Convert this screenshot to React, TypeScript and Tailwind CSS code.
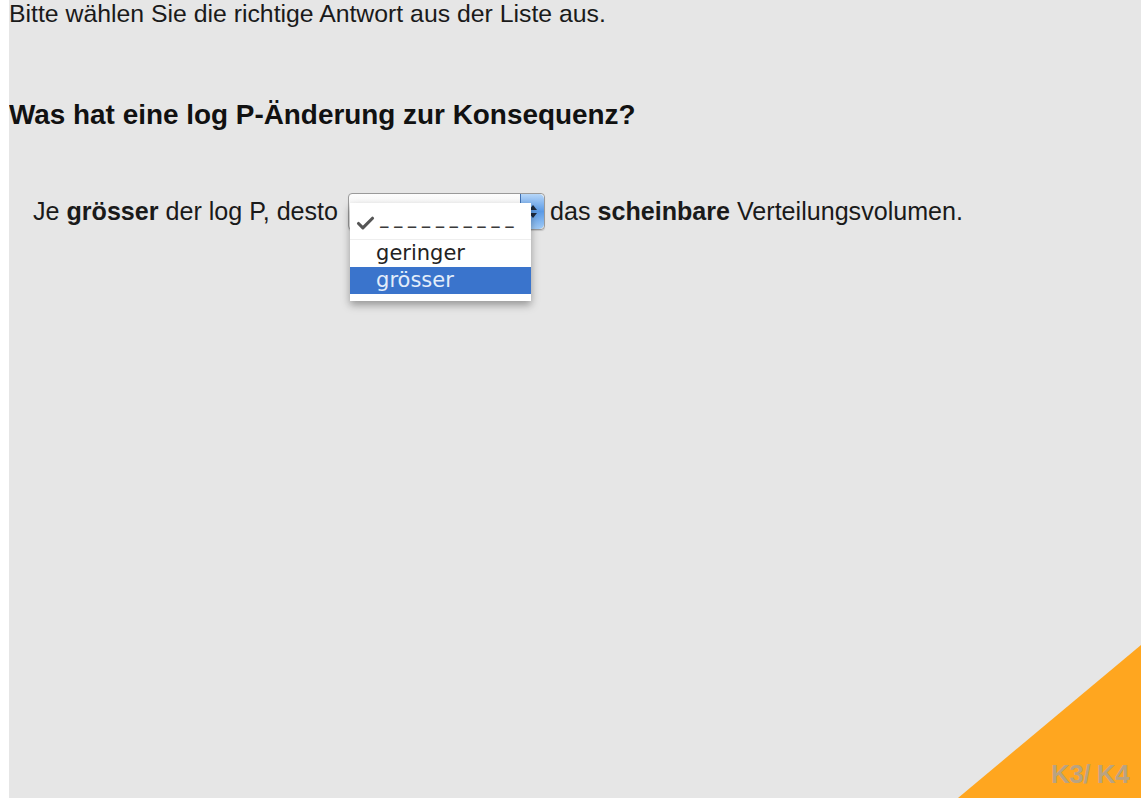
import { Check } from 'lucide-react';

// Quiz page: one fill-in-the-gap sentence with an open choice list.
const options = ['geringer', 'grösser'];

function OpenSelect() {
  return (
    <span className="relative ml-[10px] mr-[5px] inline-block h-[37px] w-[197px] shrink-0">
      {/* closed control behind the popup */}
      <span className="absolute inset-0 flex rounded-[4px] border border-[#9a9a9a] bg-gradient-to-b from-[#fdfdfd] to-[#e9e9e9] shadow-[0_1px_1px_rgba(0,0,0,0.15)]">
        <span className="flex-1" />
        <span className="flex w-[24px] flex-col items-center justify-center gap-[3px] rounded-r-[5px] border-l border-[#3f6fb0] bg-gradient-to-b from-[#b6d6f8] via-[#5a9ae6] to-[#9fcaf6]">
          <svg width="8" height="5" viewBox="0 0 8 5"><path d="M0 5L4 0L8 5Z" fill="#1d2b40" /></svg>
          <svg width="8" height="5" viewBox="0 0 8 5"><path d="M0 0L4 5L8 0Z" fill="#1d2b40" /></svg>
        </span>
      </span>

      {/* popup list */}
      <div className="absolute left-[2px] top-[10px] z-10 w-[181px] bg-white pb-[7px] pt-[4px] shadow-[0_4px_8px_rgba(0,0,0,0.35)] font-['DejaVu_Sans',sans-serif] text-[21px] leading-[26px] text-[#222]">
        <div className="flex h-[33px] items-end border-b border-[#eeeeee] pl-[5px]">
          <Check size={21} strokeWidth={3.6} className="mb-[5px] mr-[3px] text-[#555]" />
          <span className="tracking-[3.4px] text-[#3a3a3a]">––––––––––</span>
        </div>
        {options.map((o, i) => (
          <div
            key={o}
            className={
              i === 1
                ? 'h-[27px] bg-[#3a74cc] pl-[26px] text-[#e3edfa]'
                : 'h-[27px] pl-[26px]'
            }
          >
            {o}
          </div>
        ))}
      </div>
    </span>
  );
}

export default function App() {
  return (
    <div className="flex h-[798px] w-full bg-white font-['Liberation_Sans',Arial,sans-serif] text-[#111]">
      <div className="w-[9px] shrink-0 bg-white" />
      <main className="relative flex-1 overflow-hidden bg-[#e6e6e6]">
        <p className="h-[28px] text-[24.8px] leading-[28px] text-[#1a1a1a]">
          Bitte wählen Sie die richtige Antwort aus der Liste aus.
        </p>
        <h1 className="mt-[73px] text-[27.9px] font-bold leading-[28px]">
          Was hat eine log P-Änderung zur Konsequenz?
        </h1>

        <div className="mt-[64px] flex h-[37px] items-center whitespace-pre pl-[24px] text-[25.1px] leading-[37px] text-[#1a1a1a]">
          <span>
            Je <b>grösser</b> der log P, desto
          </span>
          <OpenSelect />
          <span>
            das <b>scheinbare</b> Verteilungsvolumen.
          </span>
        </div>

        {/* corner level badge */}
        <svg
          className="absolute bottom-0 right-0"
          width="183"
          height="153"
          viewBox="0 0 183 153"
        >
          <path d="M0 153L183 0V153Z" fill="#ffa61f" />
        </svg>
        <span className="absolute bottom-[4px] right-[12px] text-[26px] font-bold tracking-[-0.5px] text-[#b9a382]">
          K3/ K4
        </span>
      </main>
    </div>
  );
}
